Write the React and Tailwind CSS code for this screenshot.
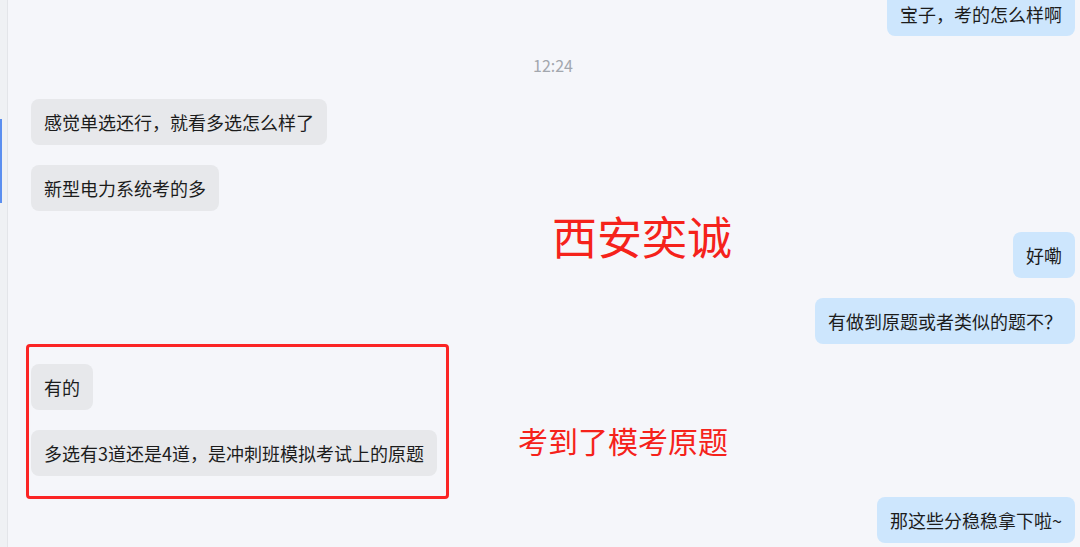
import React from 'react';

const font = { fontFamily: '"Noto Sans CJK SC", "Noto Sans", sans-serif' };

const Bubble = ({ side = 'left', children, className = '' }) => (
  <div
    className={`h-[46px] flex items-center px-[13px] rounded-[8px] text-[18px] text-[#1c1c1c] whitespace-nowrap ${
      side === 'left' ? 'bg-[#e7e8eb] self-start' : 'bg-[#cde6fd] self-end'
    } ${className}`}
  >
    {children}
  </div>
);

const App = () => {
  return (
    <div className="w-[1080px] h-[547px] overflow-hidden flex bg-[#f5f6fa]" style={font}>
      <div className="w-[8px] shrink-0 bg-[#eff1f4] border-r border-[#e3e5e9] relative">
        <div className="absolute left-0 top-[119px] w-[2px] h-[84px] bg-[#5b8ff0]" />
      </div>

      <div className="relative flex-1 flex flex-col pl-[23px] pr-[5px]">
        <Bubble side="right" className="mt-[-10px] pt-[2px]">宝子，考的怎么样啊</Bubble>

        <div className="mt-[19px] h-[22px] text-center text-[16px] text-[#a3a7ae] leading-[20px]">
          12:24
        </div>

        <Bubble className="mt-[22px]">感觉单选还行，就看多选怎么样了</Bubble>
        <Bubble className="mt-[20px]">新型电力系统考的多</Bubble>
        <Bubble side="right" className="mt-[21px]">好嘞</Bubble>
        <Bubble side="right" className="mt-[20px]">有做到原题或者类似的题不？</Bubble>

        <div className="self-start ml-[-5px] w-[423px] h-[155px] border-[3px] border-[#fb2424] rounded-[4px] pl-[2px] pt-[17px] flex flex-col">
          <Bubble>有的</Bubble>
          <Bubble className="mt-[20px]">多选有3道还是4道，是冲刺班模拟考试上的原题</Bubble>
        </div>

        <Bubble side="right" className="mt-[-2px]">那这些分稳稳拿下啦~</Bubble>

        <div className="absolute left-[544px] top-[213px] text-[45px] leading-none text-[#f5221b] whitespace-nowrap">
          西安奕诚
        </div>
        <div className="absolute left-[510px] top-[425px] text-[30px] leading-none text-[#f5221b] whitespace-nowrap">
          考到了模考原题
        </div>
      </div>
    </div>
  );
};

export default App;
